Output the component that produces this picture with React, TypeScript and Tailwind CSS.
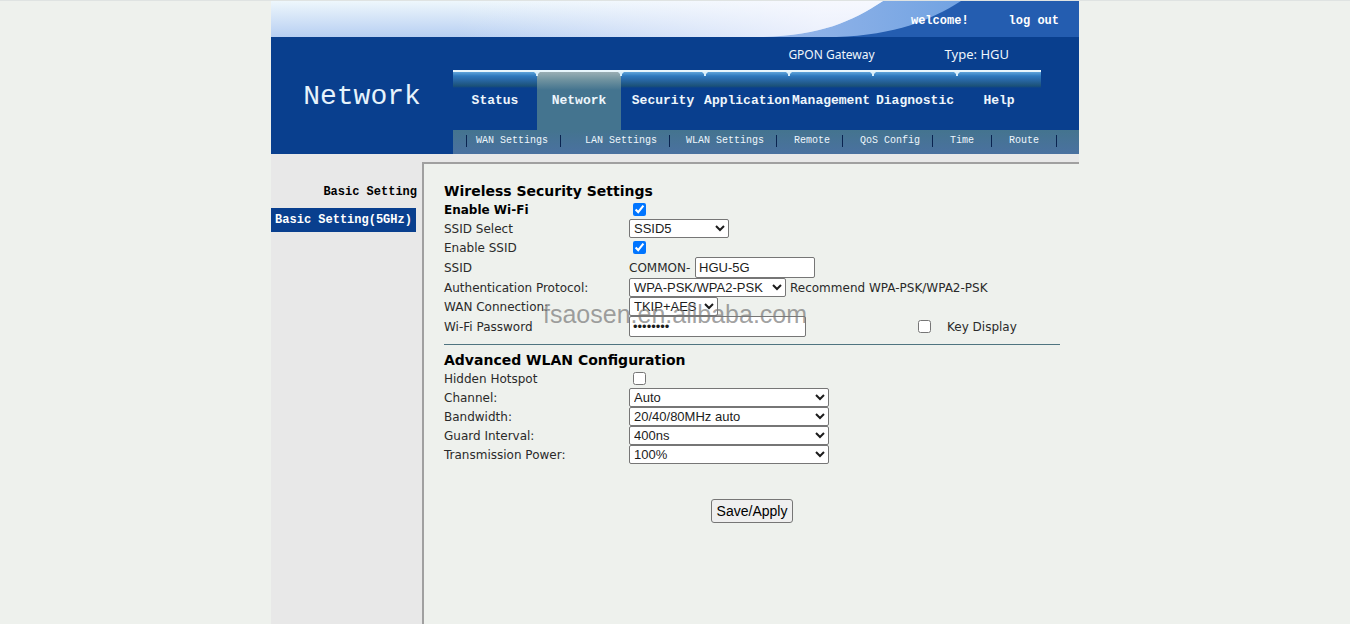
import { useState } from "react";
import clsx from "clsx";

const tabs = ["Status", "Network", "Security", "Application", "Management", "Diagnostic", "Help"];

const subTabs = [
  { label: "WAN Settings", pad: "pl-[9px] pr-3" },
  { label: "LAN Settings", pad: "pl-6 pr-3" },
  { label: "WLAN Settings", pad: "pl-4 pr-3" },
  { label: "Remote", pad: "pl-[17px] pr-3" },
  { label: "QoS Config", pad: "pl-[17px] pr-3" },
  { label: "Time", pad: "px-[17px]" },
  { label: "Route", pad: "px-[17px]" },
];

const advanced = [
  { id: "channel", label: "Channel:", value: "Auto" },
  { id: "bandwidth", label: "Bandwidth:", value: "20/40/80MHz auto" },
  { id: "guard", label: "Guard Interval:", value: "400ns" },
  { id: "power", label: "Transmission Power:", value: "100%" },
];

const mono = "font-['Liberation_Mono',monospace]";
const field = "border border-[#767676] bg-white font-['Liberation_Sans',sans-serif] text-[13px] text-[#1c1c1c]";
const selectClass = clsx(field, "h-[19px] rounded-xs leading-4");
const inputClass = clsx(field, "h-[21px] rounded-xs px-[3px]");
const checkClass = "ml-1 size-[13px]";

function Row({ id, label, bold, tall, children }: any) {
  return (
    <div className={clsx("flex items-center", tall ? "h-[21px]" : "h-[19px]")}>
      <label htmlFor={id} className={clsx("w-[185px] shrink-0", bold && "font-bold text-black")}>
        {label}
      </label>
      {children}
    </div>
  );
}

function Banner() {
  return (
    <div className="relative h-9 bg-[#245db0]">
      {/* Wave */}
      <svg className="absolute inset-0 h-full w-full" viewBox="0 0 808 36" preserveAspectRatio="none">
        <defs>
          <linearGradient id="sky" x1="0" y1="0" x2="0" y2="1">
            <stop offset="0" stopColor="#eef7fc" />
            <stop offset="1" stopColor="#b7cff2" />
          </linearGradient>
          <linearGradient id="glow" x1="0" y1="0" x2="1" y2="0">
            <stop offset="0.3" stopColor="#f8f8ff" stopOpacity="0" />
            <stop offset="0.9" stopColor="#f8f8ff" stopOpacity="0.8" />
          </linearGradient>
          <linearGradient id="wave" x1="0" y1="0" x2="1" y2="0">
            <stop offset="0" stopColor="#9ab8ea" />
            <stop offset="1" stopColor="#72a3e2" />
          </linearGradient>
        </defs>
        <path d="M480 0H690C660 19 625 34 565 36H480Z" fill="url(#wave)" />
        <path d="M0 0H612C580 21 550 34 492 36H0Z" fill="url(#sky)" />
        <path d="M0 0H612C580 21 550 34 492 36H0Z" fill="url(#glow)" />
      </svg>
      <div className={clsx("relative flex h-full items-center justify-end gap-10 pr-5 pt-1 text-xs font-bold text-white", mono)}>
        <span>welcome!</span>
        <a href="#logout">log out</a>
      </div>
    </div>
  );
}

function Header() {
  return (
    <header>
      <Banner />
      <div className="flex bg-[#093f8e]">
        <h1 className={clsx("flex w-[182px] shrink-0 items-center justify-center pt-0.5 text-[28px] text-[#e6f3fc]", mono)}>
          Network
        </h1>
        <div className="min-w-0 flex-1">
          <div className="flex h-[33px] items-center justify-end gap-[70px] pr-[70px] pt-0.5 font-['Noto_Sans',sans-serif] text-[#eef6fc]">
            <span className="text-xs">GPON Gateway</span>
            <span className="text-[13px]">Type: HGU</span>
          </div>

          {/* Main menu */}
          <nav className={clsx("flex h-[60px] text-[13px] font-bold text-[#eef6fc]", mono)}>
            {tabs.map((tab) => (
              <a
                key={tab}
                href={`#${tab}`}
                className={clsx(
                  "relative flex w-[84px] items-center justify-center border-t-2 border-[#e8f6fc] whitespace-nowrap",
                  tab === "Network"
                    ? "bg-[linear-gradient(#9aaeb4_0px,#6f929f_8px,#44748f_18px)]"
                    : "bg-[linear-gradient(#5fa4da_0px,#2f79bd_4px,#2867a4_8px,#1b5177_14px,#093f8e_16px)]"
                )}
              >
                <span className="relative z-20">{tab}</span>
                {tab !== "Help" && (
                  <svg className="absolute top-0 -right-[3px] z-10" width="6" height="4" viewBox="0 0 6 4">
                    <path d="M0 0H6L4 2V4H2V2Z" fill="#d8eefa" />
                  </svg>
                )}
              </a>
            ))}
          </nav>

          {/* Submenu */}
          <nav className={clsx("flex h-6 items-center bg-[linear-gradient(#44748f,#4a71a0)] pb-0.5 text-[10px] text-[#eef6fc]", mono)}>
            <span className="h-3 w-[14px] border-r border-[#0a2450]" />
            {subTabs.map((item) => (
              <a
                key={item.label}
                href={`#${item.label}`}
                className={clsx("h-3 border-r border-[#0a2450] leading-3 whitespace-nowrap", item.pad)}
              >
                {item.label}
              </a>
            ))}
          </nav>
        </div>
      </div>
    </header>
  );
}

function Sidebar() {
  return (
    <aside className={clsx("w-[151px] shrink-0 bg-[#e8e8e8] pt-[26px] text-xs font-bold", mono)}>
      <a href="#basic" className="mb-1 flex h-6 items-center justify-end pr-[5px] text-black">
        Basic Setting
      </a>
      <a href="#basic5" className="mr-[6px] flex h-6 items-center justify-center bg-[#093f8e] text-white">
        Basic Setting(5GHz)
      </a>
    </aside>
  );
}

export default function App() {
  const [wifi, setWifi] = useState(true);
  const [ssidOn, setSsidOn] = useState(true);
  const [hidden, setHidden] = useState(false);
  const [showKey, setShowKey] = useState(false);

  return (
    <div className="flex min-h-screen flex-col border-t border-[#dfe3e2] bg-[#eef1ed]">
      <div className="mx-auto flex w-full max-w-[808px] flex-1 flex-col">
        <Header />
        <div className="flex flex-1 bg-[#e8e8e8]">
          <Sidebar />
          <main className="relative mt-2 min-w-0 flex-1 border-t-2 border-l-2 border-[#a0a0a0] bg-[#eef1ed] pt-[19px] pr-[19px] pl-5 font-['DejaVu_Sans',sans-serif] text-xs text-[#2a2a2a]">
            <form onSubmit={(e) => e.preventDefault()}>
              <h2 className="text-sm leading-[17px] font-bold text-black">Wireless Security Settings</h2>
              <Row id="wifi" label="Enable Wi-Fi" bold>
                <input id="wifi" type="checkbox" className={checkClass} checked={wifi} onChange={() => setWifi(!wifi)} />
              </Row>
              <Row id="ssid-select" label="SSID Select">
                <select id="ssid-select" className={clsx(selectClass, "w-[100px]")}>
                  <option>SSID5</option>
                </select>
              </Row>
              <Row id="ssid-on" label="Enable SSID">
                <input id="ssid-on" type="checkbox" className={checkClass} checked={ssidOn} onChange={() => setSsidOn(!ssidOn)} />
              </Row>
              <Row id="ssid" label="SSID" tall>
                <span className="w-[66px]">COMMON-</span>
                <input id="ssid" type="text" className={clsx(inputClass, "w-[120px]")} defaultValue="HGU-5G" />
              </Row>
              <Row id="auth" label="Authentication Protocol:">
                <select id="auth" className={clsx(selectClass, "w-[157px]")}>
                  <option>WPA-PSK/WPA2-PSK</option>
                </select>
                <span className="ml-1">Recommend WPA-PSK/WPA2-PSK</span>
              </Row>
              <Row id="wan" label="WAN Connection:">
                <select id="wan" className={clsx(selectClass, "w-[89px]")}>
                  <option>TKIP+AES</option>
                </select>
              </Row>
              <Row id="password" label="Wi-Fi Password" tall>
                <input
                  id="password"
                  type={showKey ? "text" : "password"}
                  className={clsx(inputClass, "w-[177px]")}
                  defaultValue="12345678"
                />
                <input
                  id="key"
                  type="checkbox"
                  className="ml-28 size-[13px]"
                  checked={showKey}
                  onChange={() => setShowKey(!showKey)}
                />
                <label htmlFor="key" className="ml-4">Key Display</label>
              </Row>

              <hr className="my-[7px] border-[#4f7480]" />

              <h2 className="text-sm leading-[17px] font-bold text-black">Advanced WLAN Configuration</h2>
              <Row id="hidden" label="Hidden Hotspot">
                <input id="hidden" type="checkbox" className={checkClass} checked={hidden} onChange={() => setHidden(!hidden)} />
              </Row>
              {advanced.map((item) => (
                <Row key={item.id} id={item.id} label={item.label}>
                  <select id={item.id} className={clsx(selectClass, "w-[200px]")}>
                    <option>{item.value}</option>
                  </select>
                </Row>
              ))}

              <div className="mt-[35px] flex justify-center">
                <button
                  type="submit"
                  className="h-6 rounded-[3px] border border-[#767676] bg-[#efefef] px-[5px] font-['Liberation_Sans',sans-serif] text-sm text-black"
                >
                  Save/Apply
                </button>
              </div>
            </form>

            {/* Watermark */}
            <div className="pointer-events-none absolute top-[134px] left-[119px] font-['Liberation_Sans',sans-serif] text-[25px] leading-8 whitespace-nowrap text-[#787878]/70">
              fsaosen.en.alibaba.com
            </div>
          </main>
        </div>
      </div>
    </div>
  );
}
